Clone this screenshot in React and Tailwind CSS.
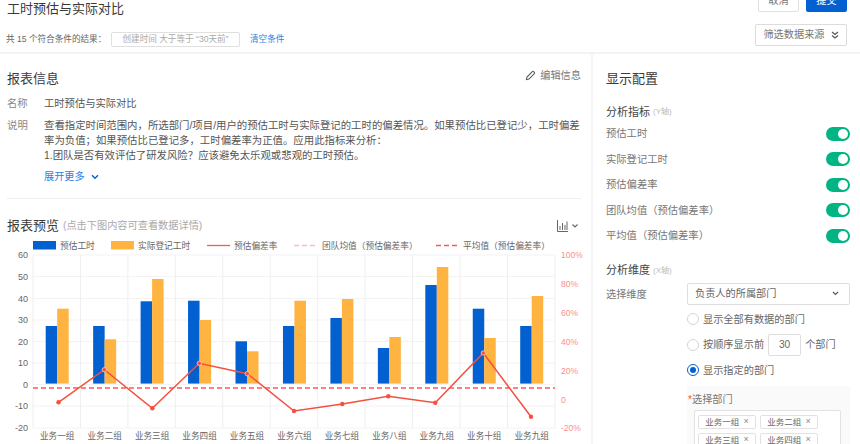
import React from "react";

const font = { fontFamily: '"Liberation Sans","Noto Sans CJK SC",sans-serif' };
const cats = ["业务一组","业务二组","业务三组","业务四组","业务五组","业务六组","业务七组","业务八组","业务九组","业务十组","业务九组"];
const blue = [326,326,301.3,300.7,341.3,326,318,348,285,308.7,326];
const orange = [308.7,339.3,279,320,351.3,300.7,299,337,267,338,296];
const pts = [[58.5,402.3],[104.3,369.7],[152.3,408.3],[199.3,363.3],[247.3,373.7],[294,411],[342.3,404],[388.3,396.3],[435.3,402.7],[483.3,353],[531,416.7]];
const left = [["60",255],["50",276.5],["40",298.5],["30",320],["20",341.5],["10",363],["0",384.5],["-10",406],["-20",428]];
const right = [["100%",255],["80%",284],["60%",313],["40%",341.5],["20%",370.5],["0",399.5],["-20%",428]];

function Chart() {
  const X0 = 33, STEP = 47.45, ZERO = 383.6;
  return (
    <svg viewBox="0 240 592 204" width="592" height="204" className="block" fontFamily='"Liberation Sans","Noto Sans CJK SC",sans-serif'>
      <rect x="33" y="241" width="23" height="8.5" fill="#0260d0" />
      <text x="60" y="248.500" fontSize="8.7" fill="#666">预估工时</text>
      <rect x="111" y="241" width="23" height="8.5" fill="#ffb340" />
      <text x="138" y="248.500" fontSize="8.7" fill="#666">实际登记工时</text>
      <line x1="207" x2="230" y1="245.5" y2="245.5" stroke="#f55a50" strokeWidth="1.3" />
      <text x="234" y="248.500" fontSize="8.7" fill="#666">预估偏差率</text>
      <line x1="294" x2="318" y1="245.5" y2="245.5" stroke="#fbc0bb" strokeWidth="1.3" strokeDasharray="5 3" />
      <text x="322" y="248.500" fontSize="8.7" fill="#666">团队均值（预估偏差率）</text>
      <line x1="436" x2="460" y1="245.5" y2="245.5" stroke="#f55a50" strokeWidth="1.4" strokeDasharray="5 3" />
      <text x="463" y="248.500" fontSize="8.7" fill="#666">平均值（预估偏差率）</text>

      {left.map(([t, y]) => (
        <g key={t}>
          <line x1="33" x2="555" y1={y} y2={y} stroke="#f3f3f3" strokeWidth="1" />
          <text x="28" y={y + 3.2} fontSize="9" fill="#666" textAnchor="end">{t}</text>
        </g>
      ))}
      {right.map(([t, y]) => (
        <text key={t} x="561" y={y + 3} fontSize="8.5" fill="#fa8f88">{t}</text>
      ))}
      {Array.from({ length: 12 }, (_, i) => (
        <line key={i} x1={X0 + i * STEP} x2={X0 + i * STEP} y1="255" y2="428" stroke="#efefef" strokeWidth="1" />
      ))}
      {cats.map((c, i) => {
        const cx = X0 + i * STEP + 24.2;
        return (
          <g key={i}>
            <rect x={cx - 11.5} y={blue[i]} width="11.5" height={ZERO - blue[i]} fill="#0260d0" />
            <rect x={cx} y={orange[i]} width="11.5" height={ZERO - orange[i]} fill="#ffb340" />
            <text x={cx} y="439" fontSize="8.6" fill="#666" textAnchor="middle">{c}</text>
          </g>
        );
      })}
      <line x1="33" x2="555" y1="388" y2="388" stroke="#f7595a" strokeWidth="1.3" strokeDasharray="5 3" />
      <polyline points={pts.map((p) => p.join(",")).join(" ")} fill="none" stroke="#f5503f" strokeWidth="1.5" />
      {pts.map((p, i) => (
        <circle key={i} cx={p[0]} cy={p[1]} r="2.2" fill="#f5503f" stroke={i === 1 || i === 3 || i === 4 || i === 9 ? "#ffd6d0" : "none"} strokeWidth="0.7" />
      ))}
    </svg>
  );
}

function Toggle({ label }) {
  return (
    <div className="flex h-[25.5px] items-center justify-between">
      <span className="text-[10.3px] text-[#777]">{label}</span>
      <span className="flex h-[14px] w-[24px] items-center justify-end rounded-full bg-[#00b583] pr-[2px]">
        <span className="h-[10px] w-[10px] rounded-full bg-white" />
      </span>
    </div>
  );
}

function Radio({ on, children }) {
  return (
    <div className="flex h-[25.5px] items-center gap-[3px] text-[10.2px] text-[#666]">
      {on ? (
        <span className="mr-[1px] flex h-[12px] w-[12px] items-center justify-center rounded-full border border-[#0260d0]">
          <span className="h-[6px] w-[6px] rounded-full bg-[#0260d0]" />
        </span>
      ) : (
        <span className="mr-[1px] h-[12px] w-[12px] rounded-full border border-[#d5d5d5]" />
      )}
      {children}
    </div>
  );
}

function Tag({ children }) {
  return (
    <span className="flex h-[14px] w-[58px] items-center justify-center gap-[4px] rounded-[2px] border border-[#e2e2e2] text-[8.5px] text-[#666]">
      {children}
      <span className="text-[9px] text-[#888]">×</span>
    </span>
  );
}

export default function App() {
  return (
    <div className="h-[444px] w-[860px] overflow-hidden bg-white" style={font}>
      <div className="-mt-[10px] flex h-[64px] justify-between border-b-2 border-[#f3f3f3] pr-[13px] pl-[7px]">
        <div className="pt-[8px]">
          <div className="h-[22px] text-[13px] leading-[22px] text-[#3a3a3a]">工时预估与实际对比</div>
          <div className="mt-[11px] flex h-[16px] items-center text-[8.6px] text-[#666]">
            <span className="w-[105px] shrink-0 -ml-[1px]">共 15 个符合条件的结果：</span>
            <span className="flex h-[15px] w-[129px] items-center justify-center rounded-[2px] border border-[#e0e0e0] text-[#aaa]">创建时间 大于等于 “30天前”</span>
            <span className="ml-[10px] text-[#2f80e0]">清空条件</span>
          </div>
        </div>
        <div className="flex w-[92px] flex-col items-end">
          <div className="flex gap-[7px]">
            <button className="h-[22px] w-[41px] rounded-[2px] border border-[#e0e0e0] text-[10.2px] text-[#777]">取消</button>
            <button className="h-[22px] w-[41px] rounded-[2px] bg-[#0260d0] text-[10.2px] text-white">提交</button>
          </div>
          <button className="mt-[12px] flex h-[22px] w-[92px] items-center justify-center gap-[6px] rounded-[2px] border border-[#dcdcdc] text-[10.2px] text-[#777]">
            筛选数据来源
            <svg width="8" height="8" viewBox="0 0 8 8" fill="none" stroke="#555" strokeWidth="1.2"><path d="M1 1l3 2.5L7 1M1 4.5L4 7l3-2.5" /></svg>
          </button>
        </div>
      </div>

      <div className="flex h-[390px]">
        <div className="w-[593px] shrink-0 border-r-2 border-[#f6f6f6]">
          <div className="mx-[7px] w-[574px]">
            <div className="flex h-[24px] items-start justify-between pt-[14px]">
              <span className="text-[13px] leading-[22px] text-[#3a3a3a]">报表信息</span>
              <span className="flex items-center gap-[4px] text-[10.2px] text-[#777]">
                <svg width="11" height="11" viewBox="0 0 12 12" fill="none" stroke="#555" strokeWidth="1.1"><path d="M1.5 10.5l.6-2.8L8 1.8a1 1 0 0 1 1.4 0l.8.8a1 1 0 0 1 0 1.4L4.3 9.900z" /></svg>
                编辑信息
              </span>
            </div>
            <div className="mt-[18px] flex text-[10.3px] leading-[15px] text-[#555]">
              <span className="w-[37px] text-[#888]">名称</span>
              <span>工时预估与实际对比</span>
            </div>
            <div className="mt-[7px] flex text-[10.4px] leading-[15px] text-[#555]">
              <span className="w-[37px] shrink-0 text-[#888]">说明</span>
              <div className="w-[538px]">
                查看指定时间范围内，所选部门/项目/用户的预估工时与实际登记的工时的偏差情况。如果预估比已登记少，工时偏差率为负值；如果预估比已登记多，工时偏差率为正值。应用此指标来分析：
                <br />
                1.团队是否有效评估了研发风险？应该避免太乐观或悲观的工时预估。
              </div>
            </div>
            <div className="mt-[6px] ml-[37px] flex h-[15px] items-center gap-[6px] text-[10.2px] text-[#2f80e0]">
              展开更多
              <svg width="8" height="6" viewBox="0 0 8 6" fill="none" stroke="#0260d0" strokeWidth="1.4"><path d="M1 1.2l3 3 3-3" /></svg>
            </div>
            <div className="mt-[14px] h-[1px] bg-[#efefef]" />
            <div className="mt-[16px] flex h-[22px] items-center justify-between">
              <div className="flex items-center gap-[4px]">
                <span className="text-[13px] text-[#3a3a3a]">报表预览</span>
                <span className="text-[10.2px] text-[#aaa]">(点击下图内容可查看数据详情)</span>
              </div>
              <div className="flex items-center gap-[4px] pr-[3px]">
                <svg width="11" height="12" viewBox="0 0 11 12" fill="none" stroke="#666" strokeWidth="1"><path d="M.5 0v11.5H11M3 10V6M5.5 10V3M8 10V5M10 10V1.500" /></svg>
                <svg width="6" height="4" viewBox="0 0 6 4" fill="none" stroke="#666" strokeWidth="1.1"><path d="M.5.5l2.5 2.5L5.500.5" /></svg>
              </div>
            </div>
          </div>
          <div className="mt-[3px]"><Chart /></div>
        </div>

        <div className="flex-1 pr-[10px] pl-[13px]">
          <div className="mt-[14px] text-[13px] leading-[22px] text-[#3a3a3a]">显示配置</div>
          <div className="mt-[14px] flex h-[16px] items-center gap-[3px] text-[11px] text-[#444]">分析指标 <span className="text-[8px] text-[#bbb]">(Y轴)</span></div>
          <div className="mt-[1px]">
            <Toggle label="预估工时" />
            <Toggle label="实际登记工时" />
            <Toggle label="预估偏差率" />
            <Toggle label="团队均值（预估偏差率）" />
            <Toggle label="平均值（预估偏差率）" />
          </div>
          <div className="mt-[14px] flex h-[16px] items-center gap-[3px] text-[11px] text-[#444]">分析维度 <span className="text-[8px] text-[#bbb]">(X轴)</span></div>
          <div className="mt-[4px] flex">
            <span className="w-[81px] shrink-0 pt-[4px] text-[10.2px] text-[#777]">选择维度</span>
            <div className="flex-1">
              <div className="flex h-[22px] items-center justify-between rounded-[2px] border border-[#dedede] pr-[10px] pl-[7px] text-[10.2px] text-[#666]">
                负责人的所属部门
                <svg width="7" height="5" viewBox="0 0 7 5" fill="none" stroke="#555" strokeWidth="1.1"><path d="M1 1l2.500 2.500L6 1" /></svg>
              </div>
              <div className="mt-[2px] flex flex-col">
                <Radio>显示全部有数据的部门</Radio>
                <Radio>
                  按顺序显示前
                  <span className="mx-[1px] flex h-[22px] w-[33px] items-center justify-center rounded-[2px] border border-[#dedede] text-[#666]">30</span>
                  个部门
                </Radio>
                <Radio on>显示指定的部门</Radio>
              </div>
            </div>
          </div>
          <div className="mt-[3px] ml-[81px] h-[100px] bg-[#fafafa] pt-[7px] pr-[8px] pl-[7px]">
            <div className="-ml-[6px] text-[10.2px] leading-[14px] text-[#777]"><span className="text-[#f5503f]">*</span>选择部门</div>
            <div className="mt-[3px] flex w-[147px] flex-wrap content-start gap-x-[4px] gap-y-[4px] rounded-[2px] border border-[#e2e2e2] bg-white py-[4px] pl-[3px]">
              <Tag>业务一组</Tag>
              <Tag>业务二组</Tag>
              <Tag>业务三组</Tag>
              <Tag>业务四组</Tag>
            </div>
          </div>
        </div>
      </div>
    </div>
  );
}
